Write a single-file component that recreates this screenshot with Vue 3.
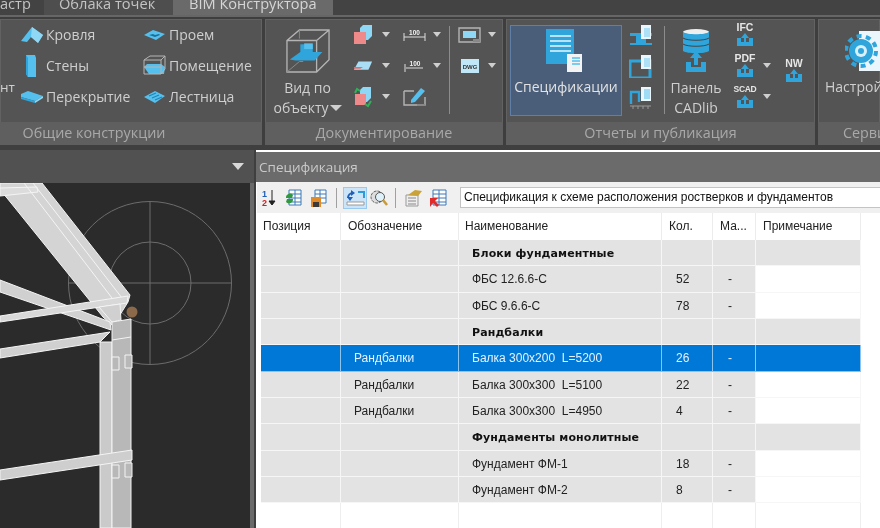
<script setup>
const rows = [
  { kind: 'group', name: 'Блоки фундаментные' },
  { kind: 'item', name: 'ФБС 12.6.6-С', qty: '52', mass: '-' },
  { kind: 'item', name: 'ФБС 9.6.6-С', qty: '78', mass: '-' },
  { kind: 'group', name: 'Рандбалки' },
  { kind: 'sel', sign: 'Рандбалки', name: 'Балка 300х200  L=5200', qty: '26', mass: '-' },
  { kind: 'item', sign: 'Рандбалки', name: 'Балка 300х300  L=5100', qty: '22', mass: '-' },
  { kind: 'item', sign: 'Рандбалки', name: 'Балка 300х300  L=4950', qty: '4', mass: '-' },
  { kind: 'group', name: 'Фундаменты монолитные' },
  { kind: 'item', name: 'Фундамент ФМ-1', qty: '18', mass: '-' },
  { kind: 'item', name: 'Фундамент ФМ-2', qty: '8', mass: '-' }
]
const exports3 = ['IFC', 'PDF', 'SCAD']
</script>

<template>
  <div class="app">
    <div class="tabs">
      <div class="tab t1">астр</div>
      <div class="tab t2">Облака точек</div>
      <div class="tab active">BIM Конструктора</div>
    </div>

    <div class="ribbon">
      <section class="panel p1">
        <div class="body b1">
          <span class="clip">нт</span>
          <div class="tools">
            <div class="tool"><svg width="24" height="18" viewBox="0 0 24 18"><path d="M1 15 12 1l11 8-5 8-7-6-4 5z" fill="#55c0ee"/><path d="M12 1 23 9l-5 8-7-6z" fill="#8fd8f5"/></svg><span>Кровля</span></div>
            <div class="tool"><svg width="24" height="24" viewBox="0 0 24 24"><path d="M6 1h9l1 3v19H8l-2-3z" fill="#55c0ee"/><path d="M6 1l2 3v19l-2-3z" fill="#2fa5dc"/></svg><span>Стены</span></div>
            <div class="tool"><svg width="24" height="14" viewBox="0 0 24 14"><path d="M1 4 8 1l15 5-8 5-14-4z" fill="#55c0ee"/><path d="M1 7l14 4v2L1 9z" fill="#2fa5dc"/><path d="M15 11l8-5v2l-8 5z" fill="#8fd8f5"/></svg><span>Перекрытие</span></div>
          </div>
          <div class="tools second">
            <div class="tool"><svg width="23" height="12" viewBox="0 0 23 12"><path d="M1 6 10 1l12 4-9 6z" fill="#55c0ee"/><path d="M6 6l4-1 2 1 4-1 1 1-5 2z" fill="#1b6f98"/></svg><span>Проем</span></div>
            <div class="tool"><svg width="23" height="21" viewBox="0 0 23 21"><path d="M1 12 6 19h15l1-7-4-3H4z" fill="#55c0ee"/><path d="M1 5 7 1h15v13l-4 5H1zM1 5h17v14M18 5l4-4M1 12h17" fill="none" stroke="#b5b5b5" stroke-width="1"/></svg><span>Помещение</span></div>
            <div class="tool"><svg width="23" height="14" viewBox="0 0 23 14"><path d="M1 7 12 1l10 5-10 7z" fill="#55c0ee"/><path d="M6 6l7-3M9 8l7-3M12 10l7-3" stroke="#1f86b8" stroke-width="1.2"/></svg><span>Лестница</span></div>
          </div>
        </div>
        <div class="title tp1">Общие конструкции</div>
      </section>

      <section class="panel p2">
        <div class="body b2">
          <div class="big view">
            <svg width="44" height="44" viewBox="0 0 46 46"><path d="M1 12 14 1h31v31L32 45H1zM1 12h31v33M32 12 45 1" fill="none" stroke="#b4b4b4" stroke-width="1.4"/><path d="M14 1v9M1 45l13-11h4" fill="none" stroke="#8c8c8c" stroke-width="1"/><path d="M4 32 15 24h23l-8 9-20 0z" fill="#2fa5dc"/><path d="M15 16h13v9H15z" fill="#2fa5dc"/><path d="M19 15h9v6h-9z" fill="#55c0ee"/></svg>
            <span>Вид по</span>
            <span class="row">объекту<i class="arr big-arr"></i></span>
          </div>
          <div class="icol first">
            <div class="ibtn"><svg width="20" height="20" viewBox="0 0 20 20"><path d="M7 3 10 0h9v11l-4 4H7z" fill="#8fd8f5"/><path d="M1 7h12v12H1z" fill="#ee8a8a"/></svg><i class="arr"></i></div>
            <div class="ibtn"><svg width="22" height="12" viewBox="0 0 22 12"><path d="M6 1h15l-4 9H1z" fill="#a9def5"/><path d="M1 7h10L8 9H1z" fill="#e46b6b"/></svg><i class="arr"></i></div>
            <div class="ibtn"><svg width="20" height="22" viewBox="0 0 20 22"><path d="M7 4l3-3h8v11l-4 4H7z" fill="#8fd8f5"/><path d="M2 8h11v11H2z" fill="#ee8a8a"/><path d="M2 7l2-4 3 2M18 15l-3 5-3-2" fill="none" stroke="#2fb15a" stroke-width="2"/></svg><i class="arr"></i></div>
          </div>
          <div class="icol second2">
            <div class="ibtn"><svg width="23" height="12" viewBox="0 0 23 12"><path d="M1 4v8M22 4v8M1 8h21" stroke="#ddd" stroke-width="1"/><text x="11.500" y="6" text-anchor="middle" class="dim">100</text></svg><i class="arr"></i></div>
            <div class="ibtn"><svg width="23" height="12" viewBox="0 0 23 12"><path d="M2 4v8M3 8h17" stroke="#ddd" stroke-width="1"/><text x="12" y="6" text-anchor="middle" class="dim">100</text></svg><i class="arr"></i></div>
            <div class="ibtn"><svg width="23" height="20" viewBox="0 0 23 20"><path d="M1 4h10M1 4v14h21V10" fill="none" stroke="#b4b4b4" stroke-width="1.4"/><path d="M14 17h8v2h-8z" fill="#888"/><path d="M8 13 18 1l4 3-10 11-4 1z" fill="#55c0ee"/></svg></div>
          </div>
          <div class="sep"></div>
          <div class="icol third">
            <div class="ibtn"><svg width="23" height="16" viewBox="0 0 23 16"><path d="M1 1h21v14H1z" fill="none" stroke="#b4b4b4" stroke-width="1.4"/><path d="M5 4h13v7H5z" fill="#8fd8f5"/><path d="M15 12h7v3h-7z" fill="#888"/></svg><i class="arr"></i></div>
            <div class="ibtn"><svg width="18" height="14" viewBox="0 0 18 14"><path d="M0 0h18v14H0z" fill="#bfe7f7"/><text x="9" y="10" text-anchor="middle" class="dwg">DWG</text></svg><i class="arr"></i></div>
          </div>
        </div>
        <div class="title">Документирование</div>
      </section>

      <section class="panel p3">
        <div class="body b3">
          <div class="spec">
            <svg width="36" height="44" viewBox="0 0 36 44"><path d="M0 0h28v35H0z" fill="#2fa5dc"/><path d="M4 7h21M4 12h21M4 17h21M4 22h21" stroke="#e6f6fd" stroke-width="1.6"/><path d="M21 25h15v18H21z" fill="#f3f3f3"/><path d="M26 29h8M26 32h8M26 35h8" stroke="#55c0ee" stroke-width="1.5"/></svg>
            <span>Спецификации</span>
          </div>
          <div class="icol small">
            <svg width="23" height="23" viewBox="0 0 23 23"><path d="M1 11h22v3h-6v7h6v2H1v-2h6v-7H1z" fill="#2fa5dc" transform="translate(0 -2)"/><path d="M12 1h10v14H12z" fill="#eaf6fc"/><path d="M15 4h6v9h-6z" fill="#55c0ee" opacity=".4"/></svg>
            <svg width="23" height="23" viewBox="0 0 23 23"><path d="M1 6h20v17H1z" fill="none" stroke="#2fa5dc" stroke-width="3"/><path d="M12 0h10v14H12z" fill="#eaf6fc"/><path d="M15 3h6v9h-6z" fill="#55c0ee" opacity=".4"/></svg>
            <svg width="23" height="23" viewBox="0 0 23 23"><path d="M2 18V6h8v10" fill="none" stroke="#2fa5dc" stroke-width="2.4"/><path d="M1 20h21M4 20v3M9 20v3M14 20v3M19 20v3" stroke="#999" stroke-width="1"/><path d="M12 1h10v14H12z" fill="#eaf6fc"/><path d="M15 3h6v10h-6z" fill="#55c0ee" opacity=".5"/></svg>
          </div>
          <div class="sep s3"></div>
          <div class="big cad">
            <svg width="28" height="44" viewBox="0 0 28 44"><ellipse cx="14" cy="3" rx="13" ry="3" fill="#eee"/><path d="M1 3v19c4 3 22 3 26 0V3c-4 3-22 3-26 0z" fill="#2fa5dc"/><path d="M1 9c4 3 22 3 26 0M1 15c4 3 22 3 26 0" fill="none" stroke="#444" stroke-width="1"/><path d="M4 33v10h20V33h-5v5H9v-5z" fill="#2fa5dc"/><path d="M14 22l6 7h-4v7h-4v-7H8z" fill="#2fa5dc"/></svg>
            <span>Панель</span>
            <span>CADlib</span>
          </div>
          <div class="icol exports">
            <div v-for="e in exports3" :key="e" class="exp">
              <div class="eicon">
                <b :class="{ tiny: e === 'SCAD' }">{{ e }}</b>
                <svg width="18" height="14" viewBox="0 0 18 14"><path d="M1 5v8h16V5h-4v4H5V5z" fill="#2fa5dc"/><path d="M9 0l4 5h-3v5H8V5H5z" fill="#2fa5dc"/></svg>
              </div>
              <i v-if="e !== 'IFC'" class="arr"></i>
            </div>
          </div>
          <div class="eicon nw">
            <b>NW</b>
            <svg width="18" height="14" viewBox="0 0 18 14"><path d="M1 5v8h16V5h-4v4H5V5z" fill="#2fa5dc"/><path d="M9 0l4 5h-3v5H8V5H5z" fill="#2fa5dc"/></svg>
          </div>
        </div>
        <div class="title">Отчеты и публикация</div>
      </section>

      <section class="panel p4">
        <div class="body b4">
          <svg width="36" height="42" viewBox="0 0 36 42"><path d="M14 1h22v40H14z" fill="#eaf6fc"/><circle cx="16" cy="21" r="12" fill="#2fa5dc"/><circle cx="16" cy="21" r="15" fill="none" stroke="#2fa5dc" stroke-width="4" stroke-dasharray="5 4.400"/><circle cx="16" cy="21" r="6" fill="#d8f0fb"/><circle cx="16" cy="21" r="3" fill="#2fa5dc"/></svg>
          <span>Настрой</span>
        </div>
        <div class="title t4">Серви</div>
      </section>
    </div>

    <div class="lower">
      <div class="left">
        <div class="lhead"><i class="arr lg"></i></div>
        <div class="viewport">
          <svg class="scene" viewBox="0 183 250 345" width="250" height="345">
            <g fill="none" stroke="#6c6c6c" stroke-width="1">
              <circle cx="150" cy="283" r="81.500"/>
              <circle cx="150" cy="283" r="41"/>
              <path d="M68.500 283H231.500M150 201.500V364.500"/>
            </g>
            <g stroke="#f4f4f4" stroke-width="1" fill="#bdbdbd">
              <path d="M0 183H42L130 295 128 302 113 326 103 317 7 198 0 190z" fill="#d4d4d4"/>
              <path d="M0 188 37 187 38 192 0 196z" fill="#dcdcdc"/>
              <path d="M24 183 112 298M33 183 122 298" fill="none"/>
              <path d="M0 280 110 322 111 330 0 292z" fill="#d0d0d0"/>
              <path d="M0 316 128 296 127 303 0 322z" fill="#d8d8d8"/>
              <path d="M99 307 120 304 121 320 112 322z" fill="#d0d0d0"/>
              <path d="M0 349 110 332 100 342 0 358z" fill="#d0d0d0"/>
              <path d="M100 342H112V528H100z" fill="#cacaca"/>
              <path d="M112 322 131 319V528H112z" fill="#b8b8b8"/>
              <path d="M112 340 131 337" fill="none"/>
              <path d="M0 470 132 450V460L0 480z" fill="#cecece"/>
              <path d="M112 357h7v13h-7zM125 355h7v13h-7zM112 465h7v13h-7zM125 463h7v14h-7z" fill="#b8b8b8"/>
            </g>
            <circle cx="132" cy="312" r="5.500" fill="#8a6a4a"/>
          </svg>
        </div>
      </div>

      <div class="right">
        <div class="rhead">Спецификация</div>
        <div class="toolbar">
          <svg class="ti" width="14" height="18" viewBox="0 0 14 18"><text x="0" y="8" class="n1">1</text><text x="0" y="17" class="n2">2</text><path d="M10 1v14M7 12l3 4 3-4z" stroke="#222" fill="#222"/></svg>
          <svg class="ti mid" width="17" height="18" viewBox="0 0 17 18"><path d="M4 1h12v15H4zM4 5h12M4 9h12M4 13h12M10 1v15" fill="#fff" stroke="#3b78b8"/><path d="M1 9a4 4 0 0 1 7-3l-1 3h-6zM8 10a4 4 0 0 1-7 3l1-3z" fill="#2e9a3d"/></svg>
          <svg class="ti mid" width="17" height="18" viewBox="0 0 17 18"><path d="M5 1h11v13H5zM5 5h11M5 9h11M10 1v13" fill="#fff" stroke="#3b78b8"/><path d="M1 8h10v10H1z" fill="#e08a28"/><path d="M3 13h6v5H3z" fill="#3a3a3a"/></svg>
          <div class="tsep"></div>
          <div class="tactive"><svg width="19" height="17" viewBox="0 0 19 17"><path d="M2 9a5 5 0 0 1 5-5" fill="none" stroke="#1f5fb8" stroke-width="2"/><path d="M5 1l4 3-4 3zM1 8l3 4 3-4z" fill="#1f5fb8"/><path d="M1 13h17v3H1z" fill="#fff" stroke="#999"/><path d="M12 3h6v6" fill="none" stroke="#2e9bd8" stroke-width="2"/></svg></div>
          <svg class="ti gear" width="18" height="18" viewBox="0 0 18 18"><circle cx="7" cy="8" r="6" fill="#ddd" stroke="#666" stroke-dasharray="3 1"/><circle cx="10" cy="8" r="4.500" fill="#dff2fb" stroke="#555"/><path d="M13 11l4 5" stroke="#c89a3a" stroke-width="2.500"/></svg>
          <div class="tsep second"></div>
          <svg class="ti opts" width="18" height="18" viewBox="0 0 18 18"><path d="M2 6h12v11H2z" fill="#eee" stroke="#999"/><path d="M4 9h8M4 12h8M4 15h8" stroke="#888"/><path d="M4 6 11 1l7 1-4 5z" fill="#c9a23a"/></svg>
          <svg class="ti arrow" width="17" height="18" viewBox="0 0 17 18"><path d="M3 1h13v15H3zM3 5h13M3 9h13M3 13h13M9 1v15" fill="#fff" stroke="#3b78b8"/><path d="M0 18V9h8L5 12l4 4-2 2-4-4z" fill="#e22a2a"/></svg>
          <div class="combo">Спецификация к схеме расположения ростверков и фундаментов</div>
        </div>

        <div class="table">
          <div class="hrow">
            <div class="cell">Позиция</div>
            <div class="cell">Обозначение</div>
            <div class="cell">Наименование</div>
            <div class="cell">Кол.</div>
            <div class="cell">Ма...</div>
            <div class="cell">Примечание</div>
          </div>
          <div v-for="(r, i) in rows" :key="i" class="trow" :class="r.kind">
            <div class="cell"></div>
            <div class="cell sign">{{ r.sign }}</div>
            <div class="cell name">{{ r.name }}</div>
            <div class="cell qty">{{ r.qty }}</div>
            <div class="cell mass">{{ r.mass }}</div>
            <div class="cell note"></div>
          </div>
          <div class="trow blank">
            <div class="cell"></div><div class="cell"></div><div class="cell"></div><div class="cell"></div><div class="cell"></div><div class="cell"></div>
          </div>
        </div>
      </div>
    </div>
  </div>
</template>

<style scoped>
.app {
  width: 880px;
  height: 528px;
  overflow: hidden;
  background: #4b4b4b;
  display: flex;
  flex-direction: column;
  font-family: "Open Sans", "Noto Sans", sans-serif;
  filter: blur(.35px);
}
.tabs {
  height: 15px;
  flex: none;
  display: flex;
  background: #434343;
  color: #c4c4c4;
  font-size: 14.600px;
  overflow: hidden;
  border-bottom: 2px solid #666;
  box-sizing: content-box;
}
.tab {
  line-height: 14px;
  margin-top: -4px;
  height: 19px;
  white-space: nowrap;
}
.t1 { width: 44px; text-align: right; padding-right: 19px; box-sizing: border-box; direction: ltr; }
.t2 { width: 129px; padding-left: 15px; box-sizing: border-box; background: #4e4e4e; }
.active { width: 160px; padding-left: 16px; box-sizing: border-box; background: #6a6a6a; color: #d6d6d6; }
.ribbon {
  height: 128px;
  flex: none;
  display: flex;
  gap: 3px;
  padding-top: 2px;
  box-sizing: border-box;
  background: #3e3e3e;
}
.panel {
  display: flex;
  flex-direction: column;
  flex: none;
  background: #545454;
  color: #cfcfcf;
  font-size: 14px;
  box-shadow: inset 0 0 0 1px #626262;
}
.p1 { width: 262px; }
.p2 { width: 238px; }
.p3 { width: 309px; }
.p4 { width: 62px; }
.body { flex: 1; display: flex; min-height: 0; position: relative; }
.title {
  height: 23px;
  flex: none;
  background: #5f5f5f;
  color: #a9a9a9;
  font-size: 14.350px;
  line-height: 22px;
  text-align: center;
}
.tp1 { padding-right: 74px; }
.clip { position: absolute; left: 0; top: 59px; font-size: 13.500px; }
.tools { margin-left: 20px; display: flex; flex-direction: column; }
.tools.second { margin-left: 0; position: absolute; left: 143px; }
.tool { height: 31px; display: flex; align-items: center; gap: 2px; }
.tools.second .tool { gap: 3px; }
.tool svg { flex: none; }
.b2 { padding: 0 0 0 5px; box-sizing: border-box; }
.big {
  display: flex;
  flex-direction: column;
  align-items: center;
  line-height: 20px;
}
.view { width: 75px; padding-top: 10px; }
.view svg { margin-bottom: 5px; }
.row { display: flex; align-items: center; gap: 1px; }
.arr {
  display: block;
  width: 0;
  height: 0;
  border-left: 4px solid transparent;
  border-right: 4px solid transparent;
  border-top: 5px solid #cfcfcf;
}
.big-arr { border-left-width: 6px; border-right-width: 6px; border-top-width: 6px; }
.lg { border-left-width: 6px; border-right-width: 6px; border-top-width: 7px; border-top-color: #d8d8d8; }
.icol { display: flex; flex-direction: column; }
.ibtn { height: 31px; display: flex; align-items: center; }
.first { margin-left: 8px; }
.first .ibtn { gap: 9px; }
.first svg { width: 20px; flex: none; }
.second2 { margin-left: 13px; }
.second2 .ibtn svg { width: 23px; margin-right: 7px; }
.dim { font: 700 6.500px "Liberation Sans", sans-serif; fill: #f2f2f2; }
.sep { width: 1px; height: 88px; margin: 7px 0 0 8px; background: #8c8c8c; }
.third { margin-left: 8px; }
.third .ibtn svg { margin-right: 7px; }
.third .ibtn:nth-child(2) svg { margin-left: 3px; margin-right: 9px; }
.dwg { font: 700 6px "Liberation Sans", sans-serif; fill: #333; }
.b3 { padding: 6px 0 0 4px; box-sizing: border-box; }
.spec {
  width: 112px;
  height: 91px;
  box-sizing: border-box;
  background: #4a5e79;
  border: 1px solid #5f7fa6;
  display: flex;
  flex-direction: column;
  align-items: center;
  padding-top: 3px;
  color: #e2e2e2;
  flex: none;
}
.spec svg { margin-left: -4px; margin-bottom: 1px; }
.spec span { line-height: 20px; margin-top: 3px; }
.small { margin-left: 7px; gap: 8px; margin-top: -1px; }
.s3 { margin: 1px 0 0 12px; }
.cad { width: 52px; margin-left: 5px; padding-top: 4px; }
.cad svg { margin-bottom: 5px; }
.exports { margin-left: 12px; margin-top: -6px; }
.exp { height: 31px; display: flex; align-items: center; gap: 7px; }
.eicon {
  width: 22px;
  display: flex;
  flex-direction: column;
  align-items: center;
  color: #e6e6e6;
  font: 700 10.500px/10px "Liberation Sans", sans-serif;
}
.eicon b.tiny { font-size: 8.500px; letter-spacing: -.3px; }
.eicon svg { display: block; margin-top: 1px; }
.nw { margin-left: 12px; margin-top: 33px; height: 26px; }
.b4 { flex-direction: column; align-items: flex-start; padding: 11px 0 0 7px; box-sizing: border-box; white-space: nowrap; }
.b4 svg { margin-left: 20px; }
.b4 span { line-height: 20px; margin-top: 5px; }
.t4 { text-align: left; padding-left: 25px; }
.lower {
  flex: 1;
  min-height: 0;
  display: flex;
  background: #3f3f3f;
  padding-top: 5px;
  gap: 2px;
}
.left {
  width: 254px;
  flex: none;
  display: flex;
  flex-direction: column;
  background: #6a6a6a;
  padding-right: 4px;
  box-sizing: border-box;
}
.lhead {
  height: 33px;
  flex: none;
  margin-right: -4px;
  background: #515151;
  display: flex;
  align-items: center;
  justify-content: flex-end;
  padding-right: 10px;
  box-sizing: border-box;
}
.viewport { flex: 1; min-height: 0; background: #2b2b2b; overflow: hidden; }
.scene { display: block; }
.right {
  flex: 1;
  min-width: 0;
  display: flex;
  flex-direction: column;
  background: #fff;
}
.rhead {
  height: 30px;
  flex: none;
  margin-top: 2px;
  background: #6b6b6b;
  color: #c9c9c9;
  font-size: 13.500px;
  line-height: 30px;
  padding-left: 3px;
}
.toolbar {
  height: 31px;
  flex: none;
  display: flex;
  align-items: center;
  background: #f0f0f0;
  padding-left: 5px;
  margin-left: 1px;
  box-sizing: border-box;
}
.ti { flex: none; }
.n1 { font: 700 9px "Liberation Sans", sans-serif; fill: #1f5fb8; }
.n2 { font: 700 9px "Liberation Sans", sans-serif; fill: #d02020; }
.mid { margin-left: 9px; }
.mid + .mid { margin-left: 8px; }
.tsep { width: 1px; height: 20px; margin: 0 6px 0 9px; background: #a0a0a0; flex: none; }
.tsep.second { margin: 0 8px 0 7px; }
.tactive {
  width: 24px;
  height: 22px;
  box-sizing: border-box;
  background: #cce4f7;
  border: 1px solid #99c9ef;
  display: flex;
  align-items: center;
  justify-content: center;
  flex: none;
}
.gear { margin-left: 3px; }
.arrow { margin-left: 8px; }
.combo {
  margin-left: 13px;
  flex: 1;
  height: 21px;
  box-sizing: border-box;
  background: #fff;
  border: 1px solid #c4c4c4;
  border-right: none;
  font: 12px/19px "Liberation Sans", sans-serif;
  color: #111;
  padding-left: 3px;
  white-space: nowrap;
}
.table {
  flex: 1;
  min-height: 0;
  padding-left: 5px;
  background: #fff;
  font: 12px "Liberation Sans", sans-serif;
  color: #222;
  overflow: hidden;
}
.hrow, .trow {
  display: grid;
  grid-template-columns: 80px 118px 203px 51px 43px 105px;
  width: 600px;
}
.hrow { height: 27px; line-height: 27px; }
.hrow .cell { border-right: 1px solid #ececec; padding-left: 2px; }
.hrow .cell + .cell { padding-left: 7px; }
.hrow .cell:nth-child(3) { padding-left: 6px; }
.trow { height: 26.340px; grid-template-rows: minmax(0, 1fr); line-height: 27px; }
.trow .cell {
  min-height: 0;
  background: #e3e3e3;
  border-right: 1px solid #f6f6f6;
  border-bottom: 1px solid #f6f6f6;
  white-space: pre;
}
.sign { padding-left: 13px; }
.name { padding-left: 13px; }
.qty { padding-left: 14px; }
.mass { padding-left: 15px; }
.trow.item .note { background: #fff; }
.group .name { font: 700 11px/27px "DejaVu Sans", sans-serif; letter-spacing: .1px; color: #111; }
.sel .cell { background: #0078d7; color: #e6f2fb; border-color: #8cc4ec; }
.blank { height: 40px; }
.blank .cell { background: #fff; border-bottom: none; border-right: 1px solid #eee; }
</style>
